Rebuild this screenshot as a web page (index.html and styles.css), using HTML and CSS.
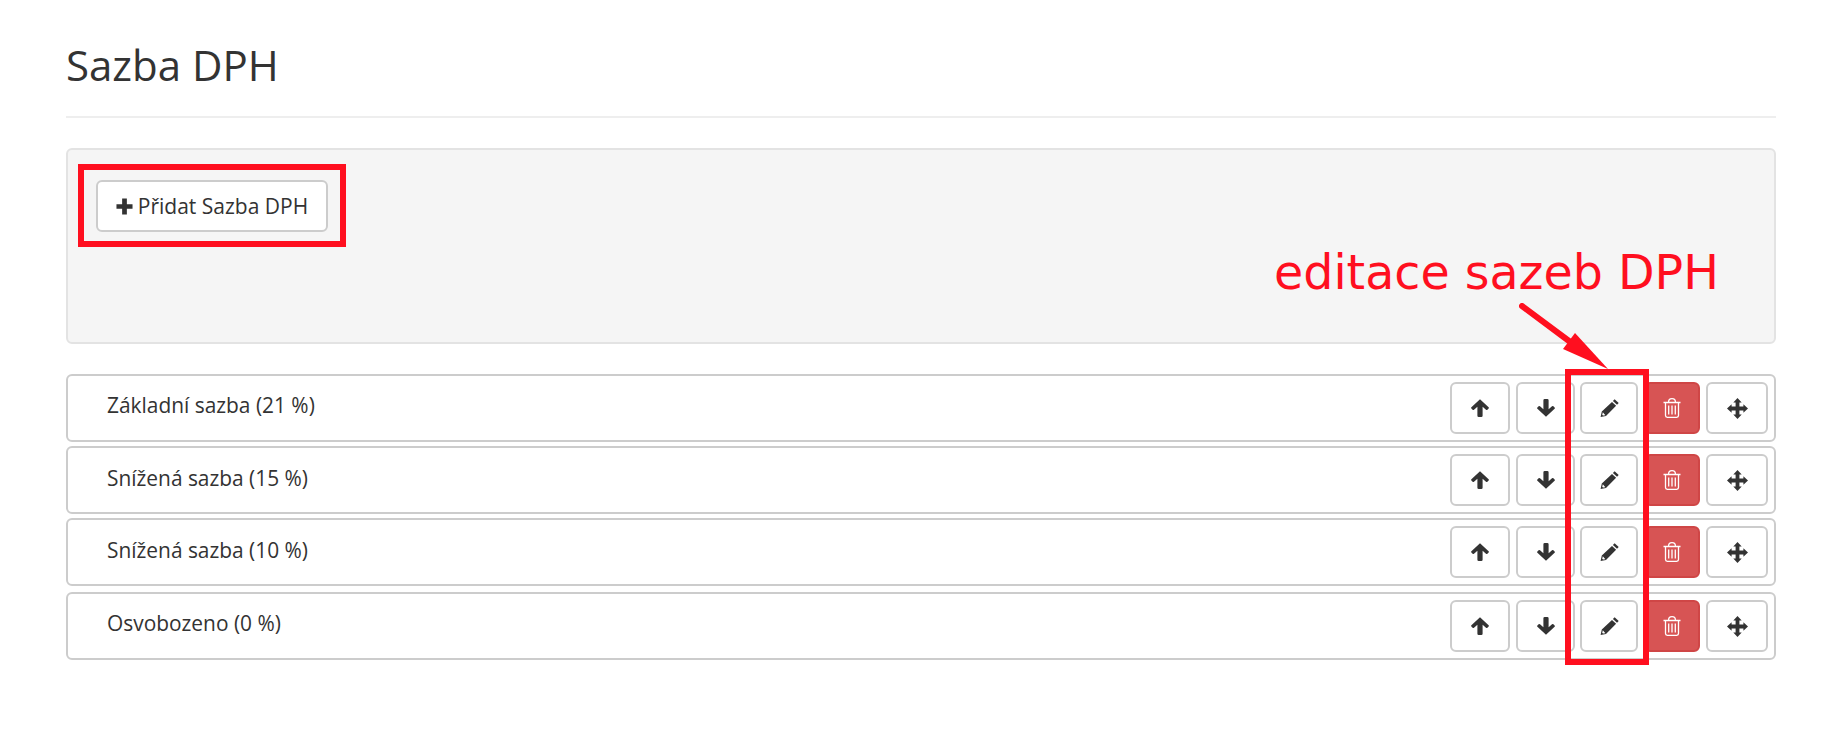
FILE: index.html
```html
<!DOCTYPE html>
<html lang="cs">
<head>
<meta charset="UTF-8">
<title>Sazba DPH</title>
<link rel="stylesheet" href="styles.css">
</head>
<body>

<svg class="icon-defs" width="0" height="0">
  <symbol id="i-plus" viewBox="0 0 18 18">
    <path d="M6.5 0.5h5v6h6v5h-6v6h-5v-6h-6v-5h6z"/>
  </symbol>
  <symbol id="i-up" viewBox="0 0 18 18">
    <path d="M9 0.3 17.6 8.2q0.6 0.7 0 1.3l-1.2 1.2q-0.7 0.6-1.4 0L11.6 7.7v9q0 1.3-1.3 1.3H7.7q-1.3 0-1.3-1.3v-9L3 10.7q-0.7 0.6-1.4 0L0.4 9.5q-0.6-0.6 0-1.3z"/>
  </symbol>
  <symbol id="i-down" viewBox="0 0 18 18">
    <path d="M9 17.7 17.6 9.8q0.6-0.7 0-1.3l-1.2-1.2q-0.7-0.6-1.4 0L11.6 10.3v-9Q11.6 0 10.3 0H7.7Q6.4 0 6.4 1.3v9L3 7.3q-0.7-0.6-1.4 0L0.4 8.5q-0.6 0.6 0 1.3z"/>
  </symbol>
  <symbol id="i-pencil" viewBox="0 0 19 18">
    <path d="M14.6 0.3 18.7 4 17 5.8 12.9 2z"/>
    <path d="M12 3 16.1 6.8 6 17 0.6 18 1.8 12.6zM2.8 13.2 2.2 16 3.4 16.6 5.4 16.2z"/>
  </symbol>
  <symbol id="i-trash" viewBox="0 0 18 20">
    <path fill="none" stroke="currentColor" stroke-width="1.3" d="M0.5 4.5h17M2.5 4.5v13q0 1.8 1.8 1.8h9.4q1.8 0 1.8-1.8v-13M5.5 4.5q0-3.8 3.5-3.8t3.5 3.8M5.7 7.5v9M9 7.5v9M12.3 7.5v9"/>
  </symbol>
  <symbol id="i-move" viewBox="0 0 21 21">
    <path d="M10.5 0 14.7 4.6H12.4V8.6H16.4V6.3L21 10.5 16.4 14.7V12.4H12.4V16.4H14.7L10.5 21 6.3 16.4H8.6V12.4H4.6V14.7L0 10.5 4.6 6.3V8.6H8.6V4.6H6.3z"/>
  </symbol>
</svg>

<div class="page">
  <h1 class="page-title">Sazba DPH</h1>

  <div class="toolbar">
    <button class="btn btn-add" type="button">
      <svg class="ic ic-plus"><use href="#i-plus"/></svg>
      Přidat Sazba DPH
    </button>
  </div>

  <ul class="rate-list">
    <li class="rate-row">
      <span class="rate-name">Základní sazba (21 %)</span>
      <div class="rate-actions">
        <button class="btn btn-sm btn-up" type="button"><svg class="ic"><use href="#i-up"/></svg></button>
        <button class="btn btn-sm btn-down" type="button"><svg class="ic"><use href="#i-down"/></svg></button>
        <button class="btn btn-sm btn-edit" type="button"><svg class="ic ic-pencil"><use href="#i-pencil"/></svg></button>
        <button class="btn btn-sm btn-danger" type="button"><svg class="ic ic-trash"><use href="#i-trash"/></svg></button>
        <button class="btn btn-sm btn-move" type="button"><svg class="ic ic-move"><use href="#i-move"/></svg></button>
      </div>
    </li>
    <li class="rate-row rate-row-low">
      <span class="rate-name">Snížená sazba (15 %)</span>
      <div class="rate-actions">
        <button class="btn btn-sm btn-up" type="button"><svg class="ic"><use href="#i-up"/></svg></button>
        <button class="btn btn-sm btn-down" type="button"><svg class="ic"><use href="#i-down"/></svg></button>
        <button class="btn btn-sm btn-edit" type="button"><svg class="ic ic-pencil"><use href="#i-pencil"/></svg></button>
        <button class="btn btn-sm btn-danger" type="button"><svg class="ic ic-trash"><use href="#i-trash"/></svg></button>
        <button class="btn btn-sm btn-move" type="button"><svg class="ic ic-move"><use href="#i-move"/></svg></button>
      </div>
    </li>
    <li class="rate-row rate-row-low">
      <span class="rate-name">Snížená sazba (10 %)</span>
      <div class="rate-actions">
        <button class="btn btn-sm btn-up" type="button"><svg class="ic"><use href="#i-up"/></svg></button>
        <button class="btn btn-sm btn-down" type="button"><svg class="ic"><use href="#i-down"/></svg></button>
        <button class="btn btn-sm btn-edit" type="button"><svg class="ic ic-pencil"><use href="#i-pencil"/></svg></button>
        <button class="btn btn-sm btn-danger" type="button"><svg class="ic ic-trash"><use href="#i-trash"/></svg></button>
        <button class="btn btn-sm btn-move" type="button"><svg class="ic ic-move"><use href="#i-move"/></svg></button>
      </div>
    </li>
    <li class="rate-row rate-row-last">
      <span class="rate-name">Osvobozeno (0 %)</span>
      <div class="rate-actions">
        <button class="btn btn-sm btn-up" type="button"><svg class="ic"><use href="#i-up"/></svg></button>
        <button class="btn btn-sm btn-down" type="button"><svg class="ic"><use href="#i-down"/></svg></button>
        <button class="btn btn-sm btn-edit" type="button"><svg class="ic ic-pencil"><use href="#i-pencil"/></svg></button>
        <button class="btn btn-sm btn-danger" type="button"><svg class="ic ic-trash"><use href="#i-trash"/></svg></button>
        <button class="btn btn-sm btn-move" type="button"><svg class="ic ic-move"><use href="#i-move"/></svg></button>
      </div>
    </li>
  </ul>
</div>

<!-- red annotations drawn over the page -->
<div class="mark mark-add"></div>
<div class="mark mark-edit"></div>
<span class="note">editace sazeb DPH</span>
<svg class="arrow" width="100" height="80" viewBox="0 0 100 80">
  <path d="M3 3 50 38" fill="none" stroke="#ff0f1f" stroke-width="6" stroke-linecap="round"/>
  <path d="M89 66 56 30 44 46z" fill="#ff0f1f"/>
</svg>

</body>
</html>
```

FILE: styles.css
```css
* {
  box-sizing: border-box;
}

body {
  margin: 0;
  background: #fff;
  color: #333;
  font-family: "Open Sans", sans-serif;
  height: 730px;
  overflow: hidden;
}

.icon-defs {
  position: absolute;
}

.page {
  padding: 40px 56px 0 66px;
}

.page-title {
  margin: 0;
  border-bottom: 2px solid #eee;
  font-size: 42px;
  line-height: 50px;
  font-weight: 400;
  color: #333;
  height: 78px;
}

.toolbar {
  margin-top: 30px;
  height: 196px;
  padding: 30px 28px;
  background: #f5f5f5;
  border: 2px solid #e3e3e3;
  border-radius: 6px;
}

.btn {
  display: inline-flex;
  align-items: center;
  justify-content: center;
  background: #fff;
  border: 2px solid #ccc;
  border-radius: 6px;
  color: #333;
  font-family: inherit;
  padding: 0;
}

.btn-add {
  width: 232px;
  height: 52px;
  gap: 5px;
  font-size: 21px;
}

.ic {
  width: 18px;
  height: 18px;
  fill: currentColor;
}

.ic-plus {
  width: 17px;
  height: 17px;
}

.ic-pencil {
  width: 19px;
}

.ic-trash {
  width: 18px;
  height: 20px;
}

.ic-move {
  width: 21px;
  height: 21px;
}

.rate-list {
  list-style: none;
  margin: 30px 0 0;
  padding: 0;
}

.rate-row {
  display: flex;
  justify-content: space-between;
  height: 68px;
  margin-bottom: 4px;
  padding: 6px 6px 0 39px;
  border: 2px solid #ccc;
  border-radius: 6px;
}

.rate-row-last {
  margin-top: 6px;
}

.rate-name {
  font-size: 20.9px;
  line-height: 46px;
}

.rate-row-low .rate-name {
  line-height: 49px;
}

.rate-actions {
  display: flex;
  gap: 6px;
}

.btn-sm {
  width: 60px;
  height: 52px;
}

.btn-down {
  width: 59px;
}

.btn-edit {
  width: 58px;
  margin-left: -1px;
}

.btn-danger {
  width: 56px;
  background: #d75454;
  border-color: #cf4646;
  color: #fff;
}

.btn-move {
  width: 62px;
}

.mark {
  position: absolute;
  border: 6px solid #ff0f1f;
}

.mark-add {
  left: 78px;
  top: 164px;
  width: 268px;
  height: 83px;
}

.mark-edit {
  left: 1565px;
  top: 369px;
  width: 84px;
  height: 296px;
}

.note {
  position: absolute;
  left: 1274px;
  top: 245px;
  font-family: "DejaVu Sans", sans-serif;
  font-size: 47.5px;
  line-height: 56px;
  color: #ff0f1f;
  white-space: nowrap;
}

.arrow {
  position: absolute;
  left: 1519px;
  top: 303px;
}
```
